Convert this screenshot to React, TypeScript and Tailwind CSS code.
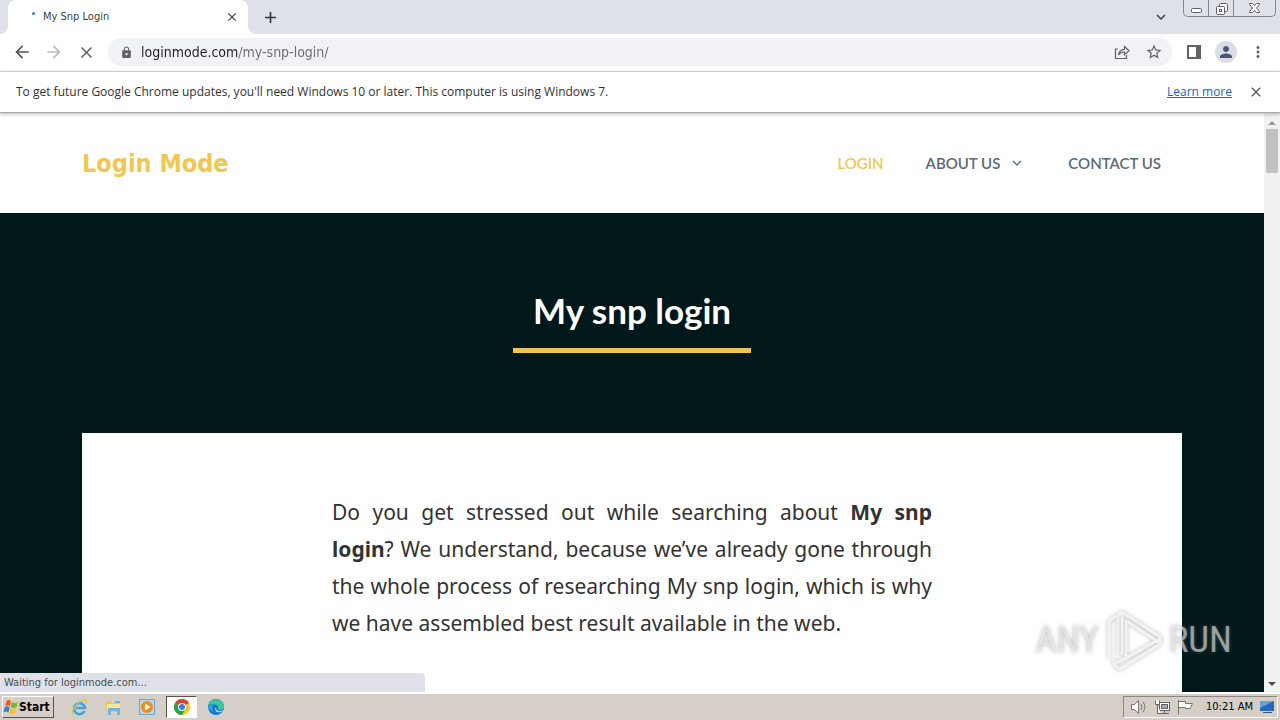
import type { ReactNode } from 'react';
import {
  MdAdd,
  MdArrowBack,
  MdArrowForward,
  MdClose,
  MdExpandMore,
  MdLock,
  MdMoreVert,
  MdPerson,
  MdStarBorder,
} from 'react-icons/md';

type IconButtonProps = {
  label: string;
  className?: string;
  children: ReactNode;
};

function IconButton({ label, className = '', children }: IconButtonProps) {
  return (
    <button type="button" aria-label={label} className={`flex shrink-0 items-center justify-center ${className}`}>
      {children}
    </button>
  );
}

function WindowControls() {
  return (
    <div className="flex h-[17px] w-[93px] self-start overflow-hidden rounded-b-[5px] border border-t-0 border-[#83868c] bg-[#dfe2e8]">
      <IconButton label="Minimize" className="w-[25px] border-r border-[#83868c]">
        <svg width="13" height="13" fill="#fff" stroke="#5c6068">
          <rect x="1.5" y="6.5" width="10" height="4" rx="1" />
        </svg>
      </IconButton>
      <IconButton label="Restore" className="w-[25px] border-r border-[#83868c]">
        <svg width="13" height="13" fill="#fff" stroke="#5c6068">
          <rect x="4.5" y="1.5" width="8" height="8" rx="1" />
          <rect x="1.5" y="4.5" width="8" height="8" rx="1" />
          <rect x="4.5" y="7.5" width="2" height="2" />
        </svg>
      </IconButton>
      <IconButton label="Close window" className="flex-1">
        <svg width="13" height="12" fill="#fff" stroke="#5c6068">
          <path d="M1.5 1.5h3l2 2.2 2-2.2h3v1L8.6 6l2.9 3.5v1h-3l-2-2.2-2 2.2h-3v-1L4.4 6 1.5 2.5z" />
        </svg>
      </IconButton>
    </div>
  );
}

function TabStrip() {
  return (
    <div className="flex h-[34px] bg-[#dee1e8]">
      <div className="w-2 bg-white">
        <div className="h-full rounded-br-lg bg-[#dee1e8]" />
      </div>
      <div className="flex w-60 items-center rounded-t-lg bg-white pl-6 pr-2">
        <span className="mb-2 size-[3px] rounded-full bg-[#3f78d8]" />
        <span className="ml-2 flex-1 text-[11px] text-[#3c4043]">My Snp Login</span>
        <IconButton label="Close tab" className="size-4 text-[#3c4043]">
          <MdClose size={14} />
        </IconButton>
      </div>
      <div className="w-2 bg-white">
        <div className="h-full rounded-bl-lg bg-[#dee1e8]" />
      </div>
      <IconButton label="New tab" className="ml-1 w-5 text-[#303338]">
        <MdAdd size={19} />
      </IconButton>
      <div className="flex flex-1 justify-end">
        <IconButton label="Search tabs" className="mr-3 w-5 text-[#3c4043]">
          <MdExpandMore size={18} />
        </IconButton>
        <WindowControls />
        <span className="w-1" />
      </div>
    </div>
  );
}

function Toolbar() {
  return (
    <div className="flex h-[38px] items-center border-b border-[#d9dbde] bg-white pb-px text-[#5f6368]">
      <div className="flex gap-3 pl-3">
        <IconButton label="Back" className="size-5 text-[#54575b]">
          <MdArrowBack size={20} />
        </IconButton>
        <IconButton label="Forward" className="size-5 text-[#babcbe]">
          <MdArrowForward size={20} />
        </IconButton>
        <IconButton label="Stop loading" className="size-5">
          <MdClose size={19} />
        </IconButton>
      </div>
      <div className="ml-3 flex h-7 flex-1 items-center rounded-full bg-[#f0f2f5] pl-3 pr-2">
        <MdLock size={13} />
        <input
          type="text"
          aria-label="Address and search bar"
          defaultValue="loginmode.com/my-snp-login/"
          className="ml-2 min-w-0 flex-1 bg-[linear-gradient(90deg,#202124_97px,#686c71_97px)] bg-clip-text text-[14px] text-transparent outline-none"
        />
        <IconButton label="Share this page" className="size-5">
          <svg width="16" height="16" fill="none" stroke="currentColor" strokeWidth="1.2">
            <path d="M4 5H1.5v9.5h11V11" />
            <path d="M4.5 11c.5-3.5 2.5-5.5 6-5.7V2.5L15 6.7l-4.500 4V8c-2.700 0-4.500.8-6 3z" />
          </svg>
        </IconButton>
        <IconButton label="Bookmark this tab" className="ml-3 size-5">
          <MdStarBorder size={18} />
        </IconButton>
      </div>
      <div className="flex items-center gap-[11px] px-3">
        <IconButton label="Side panel" className="size-5">
          <svg width="14" height="14" fill="currentColor">
            <path d="M0 0h14v14H0zM2 2v10h7V2z" fillRule="evenodd" />
          </svg>
        </IconButton>
        <IconButton label="Profile" className="size-[22px] rounded-full bg-[#dadde4] text-[#4b5674]">
          <MdPerson size={18} />
        </IconButton>
        <IconButton label="Chrome menu" className="size-5">
          <MdMoreVert size={18} />
        </IconButton>
      </div>
    </div>
  );
}

function UpdateNotice() {
  return (
    <div className="relative z-10 flex h-[41px] items-center border-b border-[#aaa] bg-white px-4 font-['Open_Sans',sans-serif] text-[12px] text-[#303134] shadow-[0_1px_4px_rgba(0,0,0,0.3)]">
      <p className="flex-1">
        To get future Google Chrome updates, you&apos;ll need Windows 10 or later. This computer is using Windows 7.
      </p>
      <a href="#learn-more" className="text-[#1a62c5] underline">
        Learn more
      </a>
      <IconButton label="Dismiss" className="ml-4 size-4 text-[#54575b]">
        <MdClose size={16} />
      </IconButton>
    </div>
  );
}

function SiteHeader() {
  return (
    <header className="bg-white">
      <div className="mx-auto flex h-[100px] max-w-[1100px] items-center justify-between">
        <a href="#home" className="pt-0.5 text-[25px] leading-[34px] font-bold text-[#f0c755]">
          Login Mode
        </a>
        <nav className="flex font-['Lato',sans-serif] text-[15px] font-semibold text-[#5a6a76]">
          <a href="#login" className="px-[21px] text-[#f0c755]">
            LOGIN
          </a>
          <a href="#about" className="flex items-center px-[21px]">
            ABOUT US
            <svg width="10" height="6" className="ml-3 mr-1" fill="none" stroke="currentColor" strokeWidth="1.3">
              <path d="M1 1l4 4 4-4" />
            </svg>
          </a>
          <a href="#contact" className="px-[21px]">
            CONTACT US
          </a>
        </nav>
      </div>
    </header>
  );
}

function Watermark() {
  return (
    <div className="pointer-events-none absolute right-12 bottom-5 z-10 flex h-16 items-center font-['Roboto_Condensed',sans-serif] text-[37px] text-[#eceeef]/60 [text-shadow:0_0_4px_rgba(110,110,110,0.5)]">
      <span>ANY</span>
      <svg
        width="62"
        height="64"
        className="mx-1 opacity-80 drop-shadow-[0_0_2px_rgba(90,90,90,0.5)]"
        fill="none"
        stroke="#eff0f0"
        strokeWidth="3"
        strokeLinejoin="round"
      >
        <path d="M19 47V4l38 25v7L17 61l-6-4v-6" />
        <path d="M19 4l-4 3v40" />
        <path d="M23 12v38l34-19" />
        <path d="M25 14l32 21" />
        <path d="M6 50V13l7-5" />
        <path d="M11 56l12-6" />
      </svg>
      <span>RUN</span>
    </div>
  );
}

function ScrollBar() {
  return (
    <div className="flex w-4 flex-col items-center bg-[#f1f1f1] py-1.5">
      <svg width="8" height="4" fill="#9b9b9b" className="mt-0.5">
        <path d="M0 4l4-4 4 4z" />
      </svg>
      <div className="mt-1 h-11 w-3 bg-[#c1c1c1]" />
      <svg width="8" height="4" fill="#505050" className="mt-auto">
        <path d="M0 0h8L4 4z" />
      </svg>
    </div>
  );
}

function Page() {
  return (
    <div className="relative flex min-h-0 flex-1">
      <main className="flex min-w-0 flex-1 flex-col overflow-hidden bg-[#00181a]">
        <SiteHeader />
        <div className="flex h-[220px] shrink-0 flex-col items-center pt-[76px]">
          <h1 className="border-b-5 border-[#f0c755] px-5 pb-4 font-['Lato',sans-serif] text-[35px] leading-[43px] font-bold text-white">
            My snp login
          </h1>
        </div>
        <article className="mx-auto w-full max-w-[1100px] flex-1 bg-white pt-[61px]">
          <p className="mx-auto max-w-[600px] text-justify font-['Noto_Sans',sans-serif] text-[21px] leading-[37px] text-[#333]">
            Do you get stressed out while searching about <strong>My snp login</strong>? We understand, because we’ve
            already gone through the whole process of researching My snp login, which is why we have assembled best
            result available in the web.
          </p>
        </article>
      </main>
      <ScrollBar />
      <Watermark />
      <div className="absolute bottom-0 left-0 flex h-[19px] w-[425px] items-center rounded-tr bg-[#dee1e8] pt-0.5 pl-1 text-[11px] text-[#4a4d52]">
        Waiting for loginmode.com...
      </div>
    </div>
  );
}

function WindowsFlag() {
  return (
    <svg width="16" height="16" viewBox="0 0 16 16">
      <path d="M3.5 2.5C5 .5 7 .8 8 2.5L6.8 7.5C5.3 5.7 3.8 6 2 7.5z" fill="#e9592b" />
      <path d="M8.8 3c2 1.5 4 1.2 6.2-.2L13.5 8c-2 1.3-4 1.2-5.9 0z" fill="#77b92c" />
      <path d="M1.7 8.5c1.8-1.6 3.5-1.5 4.9.2L5.4 13.5C3.8 12 2.2 12.2.3 13.5z" fill="#3a7fcf" />
      <path d="M7.4 9c2 1.4 3.9 1.3 5.9 0L12 14c-2 1.5-4 1.5-5.8 0z" fill="#f7c325" />
    </svg>
  );
}

function ExplorerIcon() {
  return (
    <svg width="17" height="17" viewBox="0 0 17 17" fill="none">
      <path d="M13.5 12A5.5 5.5 0 1 1 14 9H5" stroke="#3da6df" strokeWidth="2.6" />
      <path d="M2 15.5C-1 13 5 4 12 1.5c3-1 4 .5 3.3 2.5" stroke="#e5bd42" strokeWidth="1.3" />
    </svg>
  );
}

function FolderIcon() {
  return (
    <svg width="17" height="17" viewBox="0 0 17 17">
      <path d="M1 2h5l1 2h8v9H1z" fill="#e8c85b" />
      <path d="M2 5h13v7H2z" fill="#f8e69a" />
      <path d="M10 2h5v2h-5z" fill="#6fb0d8" />
      <path d="M3 9h12v7h-3v-4H6v4H3z" fill="#73b5dc" />
    </svg>
  );
}

function MediaIcon() {
  return (
    <svg width="16" height="16" viewBox="0 0 16 16">
      <rect x=".5" y=".5" width="15" height="15" fill="#b6d8ed" stroke="#6fa6cb" />
      <circle cx="8" cy="8" r="6" fill="#f28b19" />
      <path d="M6 4.5v7L11.5 8z" fill="#fff" />
    </svg>
  );
}

function ChromeIcon() {
  return (
    <svg width="16" height="16" viewBox="0 0 16 16">
      <circle cx="8" cy="8" r="8" fill="#f9c720" />
      <path d="M8 8L1.07 4A8 8 0 0 1 14.93 4z" fill="#df4131" />
      <path d="M8 8L1.07 4A8 8 0 0 0 8 16l3.5-6z" fill="#2a9f4d" />
      <circle cx="8" cy="8" r="4" fill="#fff" />
      <circle cx="8" cy="8" r="3" fill="#3b7ded" />
    </svg>
  );
}

function EdgeIcon() {
  return (
    <svg width="16" height="16" viewBox="0 0 16 16">
      <circle cx="8" cy="8" r="8" fill="#1479cf" />
      <path d="M.5 6A8 8 0 0 1 16 7.5c0 3-3 4-6 3 1-2 0-4.5-3-5-2.5-.4-5 .2-6.500.5z" fill="#3dc6a0" />
      <path d="M0 8c.5-2.5 3.5-4 6.5-3C4 6.5 3.5 10 6 12.5 3 12 .5 10.5 0 8z" fill="#25a5dd" />
      <path d="M8.5 7.5c-1 1-.8 3 .5 3.8 2 1.2 4.500 1 6.300 0C14 13 12.500 13.300 11 13.300c-4 0-5-4-2.500-5.800z" fill="#d6cfc7" />
    </svg>
  );
}

const shortcuts = [
  { label: 'Internet Explorer', icon: <ExplorerIcon />, active: false },
  { label: 'Windows Explorer', icon: <FolderIcon />, active: false },
  { label: 'Media Player', icon: <MediaIcon />, active: false },
  { label: 'Google Chrome', icon: <ChromeIcon />, active: true },
  { label: 'Microsoft Edge', icon: <EdgeIcon />, active: false },
];

function SystemTray() {
  return (
    <div className="mr-0.5 ml-auto flex h-[22px] items-center border border-[#8b8781] border-r-white border-b-white pr-0.5 pl-1.5">
      <svg width="18" height="16" fill="#fff" stroke="#77736e">
        <path d="M1.5 5.5h3l4-4v13l-4-4h-3z" />
        <path d="M11 5q2 3 0 6M13 3q4 5 0 10" fill="none" />
      </svg>
      <svg width="17" height="16" className="ml-1.5" fill="#fff" stroke="#66625e">
        <rect x="5.5" y="3.5" width="10" height="8" />
        <rect x="7.5" y="5.5" width="6" height="4" fill="#aaa" />
        <path d="M7 14.5h8M10.5 12v2" />
        <path d="M1.5 1.5v4h4v-4M3.5 6v8.5H7" />
      </svg>
      <svg width="17" height="16" className="ml-1.5" fill="#fff" stroke="#77736e">
        <path d="M1.5 1v14.5M1.5 2.5h7v2h7l-2.5 5H8.5v-1h-7" />
      </svg>
      <time className="ml-3 text-[11px] text-black">10:21 AM</time>
      <svg width="16" height="14" className="ml-1.5">
        <rect x="1" y="1" width="14" height="10" fill="#2867b8" />
        <path d="M1 1h14L1 8z" fill="#5ea3e0" />
        <path d="M4 12h9v1H4z" fill="#34557c" />
      </svg>
    </div>
  );
}

function Taskbar() {
  return (
    <footer className="flex h-7 shrink-0 items-center border-t-2 border-white bg-[#d6cfc7] pl-0.5">
      <button
        type="button"
        className="flex h-[22px] w-[52px] items-center border border-white border-r-[#55514c] border-b-[#55514c] text-[12px] font-bold text-black"
      >
        <WindowsFlag />
        Start
      </button>
      <div className="ml-2.5 flex items-center gap-1">
        {shortcuts.map(({ label, icon, active }) => (
          <IconButton
            key={label}
            label={label}
            className={active ? 'h-[22px] w-[31px] border border-[#55514c] border-r-white border-b-white bg-white' : 'h-[22px] w-[30px]'}
          >
            {icon}
          </IconButton>
        ))}
      </div>
      <SystemTray />
    </footer>
  );
}

export default function App() {
  return (
    <div className="flex h-screen flex-col overflow-hidden bg-white font-['DejaVu_Sans_Condensed','DejaVu_Sans',sans-serif]">
      <TabStrip />
      <Toolbar />
      <UpdateNotice />
      <Page />
      <Taskbar />
    </div>
  );
}
